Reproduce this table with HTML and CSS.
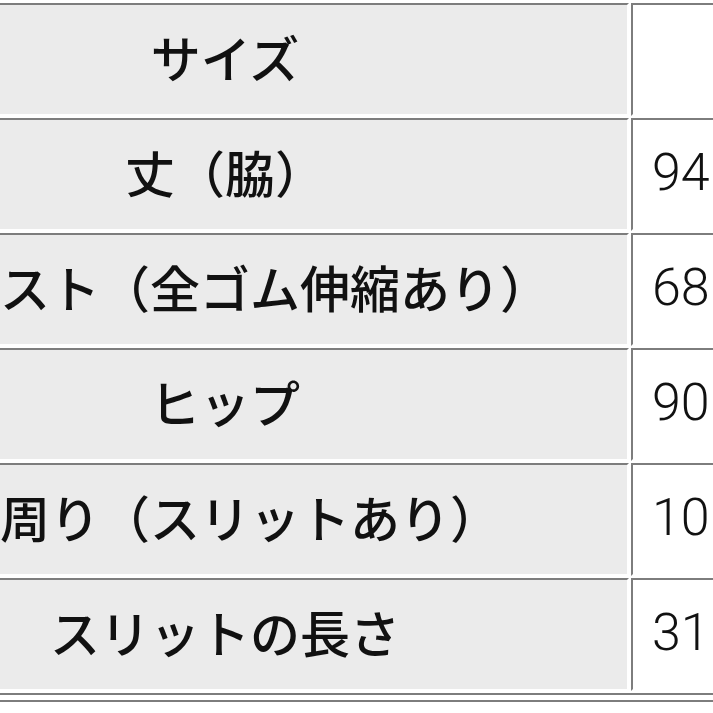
FILE: index.html
```html
<!DOCTYPE html>
<html lang="ja">
<head>
<meta charset="utf-8">
<link rel="stylesheet" href="styles.css">
</head>
<body>
<div class="sheet">
  <div class="size-table">
    <div class="cell label">サイズ</div>
    <div class="cell value"></div>
    <div class="cell label">丈（脇）</div>
    <div class="cell value">94</div>
    <div class="cell label">ウエスト（全ゴム伸縮あり）</div>
    <div class="cell value">68</div>
    <div class="cell label">ヒップ</div>
    <div class="cell value">90</div>
    <div class="cell label">裾周り（スリットあり）</div>
    <div class="cell value">10</div>
    <div class="cell label">スリットの長さ</div>
    <div class="cell value">31</div>
  </div>
  <div class="next-rule"></div>
</div>
</body>
</html>
```
FILE: styles.css
```css
html, body {
  margin: 0;
  padding: 0;
  background: #ffffff;
}
body {
  width: 713px;
  height: 713px;
  overflow: hidden;
  font-family: "Noto Sans CJK JP", "Noto Sans", sans-serif;
  color: #111111;
}
.sheet {
  margin-left: -179px;
  width: 1000px;
}
.size-table {
  display: grid;
  grid-template-columns: 808px 160px;
  grid-auto-rows: 113px;
  gap: 2px;
  padding: 3px 0 2px 0;
  border-bottom: 2px solid #7d7d7d;
}
.cell {
  box-sizing: border-box;
  border-top: 2px solid #7d7d7d;
  border-left: 2px solid #7d7d7d;
  border-right: 2px solid #ffffff;
  border-bottom: 2px solid #ffffff;
  display: flex;
  align-items: center;
  white-space: nowrap;
  overflow: hidden;
}
.label {
  background: #ebebeb;
  justify-content: center;
  font-size: 50px;
  font-weight: 500;
  padding-bottom: 8px;
}
.value {
  background: #ffffff;
  padding-left: 19px;
  padding-bottom: 4px;
  font-family: "Roboto", "Noto Sans", sans-serif;
  font-size: 52px;
  font-weight: 300;
}
.next-rule {
  margin-top: 5px;
  border-top: 2px solid #7d7d7d;
}
```
